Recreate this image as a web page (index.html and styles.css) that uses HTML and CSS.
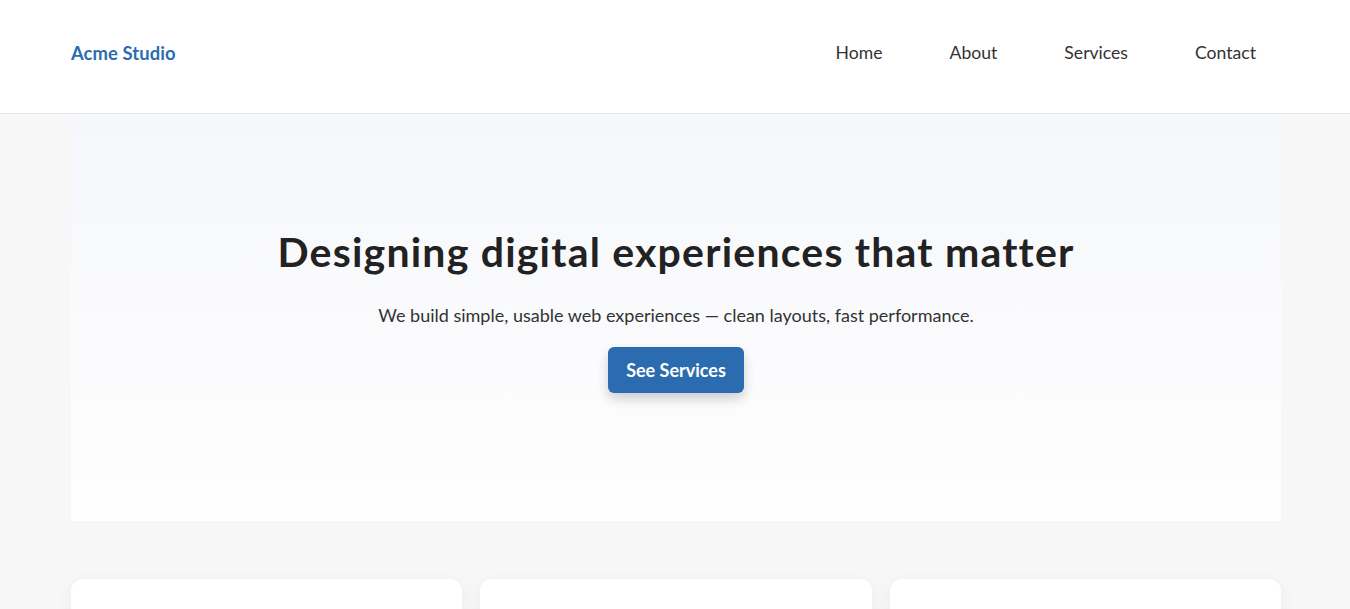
FILE: index.html
```html
<!DOCTYPE html>
<html lang="en">
<head>
<meta charset="utf-8">
<title>Acme Studio</title>
<link rel="stylesheet" href="styles.css">
</head>
<body>
<header class="site-header">
  <div class="container header-inner">
    <a class="logo" href="#">Acme Studio</a>
    <nav class="nav">
      <a href="#">Home</a>
      <a href="#">About</a>
      <a href="#">Services</a>
      <a href="#">Contact</a>
    </nav>
  </div>
</header>
<main class="container">
  <section class="hero">
    <h1>Designing digital experiences that matter</h1>
    <p>We build simple, usable web experiences — clean layouts, fast performance.</p>
    <a class="btn" href="#">See Services</a>
  </section>
  <section class="cards">
    <div class="card"></div>
    <div class="card"></div>
    <div class="card"></div>
  </section>
</main>
</body>
</html>
```
FILE: styles.css
```css
* { box-sizing: border-box; }
html, body { margin: 0; padding: 0; }
body {
  background: #f7f7f7;
  font-family: "Lato", "Open Sans", sans-serif;
  color: #222;
}
a { text-decoration: none; }
.container {
  width: 1210px;
  margin-left: calc(50% - 604px);
}
.site-header {
  background: #fff;
  border-bottom: 1px solid #e6e6e6;
  height: 114px;
}
.header-inner {
  height: 113px;
  padding-bottom: 8px;
  display: flex;
  align-items: center;
  justify-content: space-between;
}
.logo {
  color: #2b6cb0;
  font-weight: 700;
  font-size: 18.4px;
  letter-spacing: 0.1px;
}
.nav {
  display: flex;
  gap: 17px;
}
.nav a {
  color: #333;
  font-size: 17.6px;
  padding: 8px 25px;
}
.hero {
  background: linear-gradient(#f6f7fb, #fefefe);
  padding: 114px 20px 128px;
  display: flex;
  flex-direction: column;
  align-items: center;
  text-align: center;
}
.hero h1 {
  margin: 0 0 26px;
  font-size: 41px;
  line-height: 48px;
  font-weight: 700;
  letter-spacing: 1.2px;
  color: #222;
}
.hero p {
  margin: 0 0 18px;
  font-size: 18px;
  line-height: 27px;
  color: #333;
}
.btn {
  display: inline-block;
  background: #2b6cb0;
  color: #fff;
  font-weight: 700;
  font-size: 18px;
  height: 46px;
  line-height: 46px;
  padding: 0 18px;
  border-radius: 6px;
  box-shadow: 0 6px 12px rgba(0,0,0,0.18);
}
.cards {
  margin-top: 58px;
  display: grid;
  grid-template-columns: repeat(3, 1fr);
  gap: 18px;
}
.card {
  background: #fff;
  border-radius: 12px;
  min-height: 200px;
  box-shadow: 0 4px 18px rgba(0,0,0,0.05);
}
```
